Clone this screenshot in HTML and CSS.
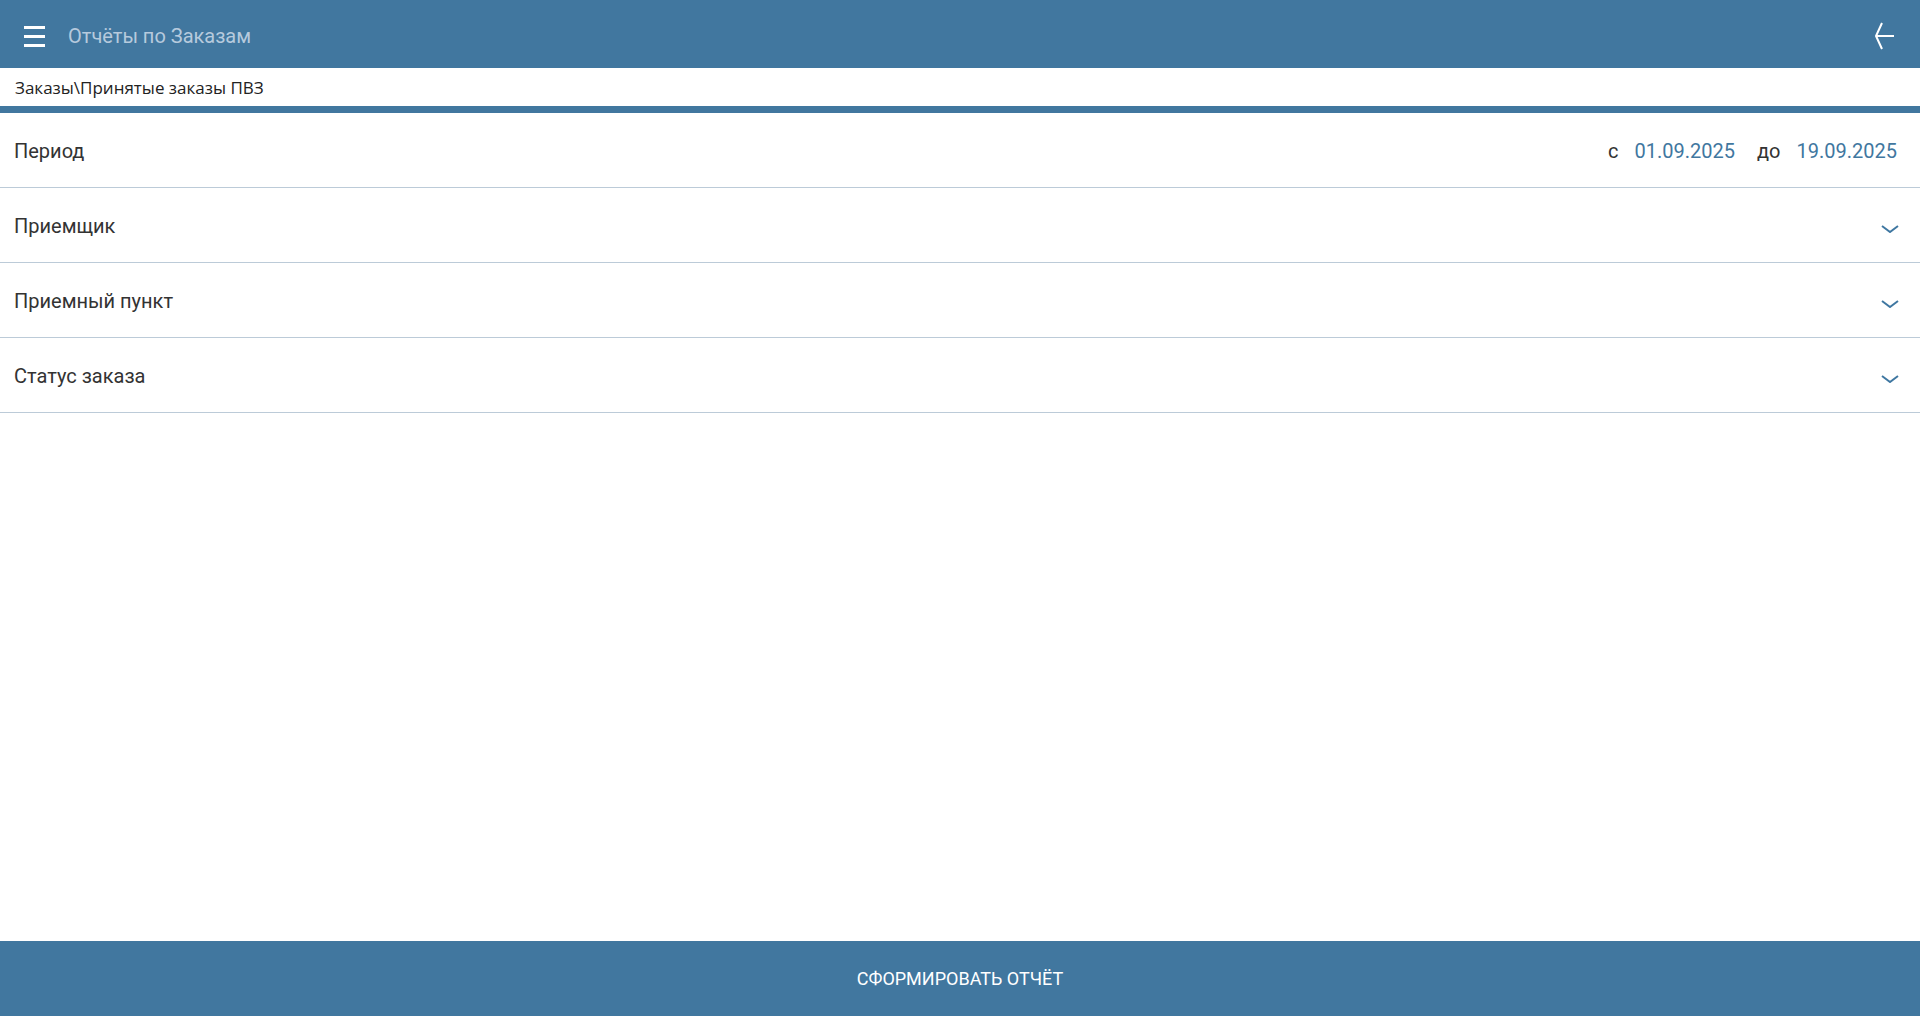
FILE: index.html
```html
<!DOCTYPE html>
<html lang="ru">
<head>
  <meta charset="UTF-8" />
  <meta name="viewport" content="width=device-width, initial-scale=1.0" />
  <title>Отчёты по Заказам</title>
  <link rel="stylesheet" href="styles.css">
</head>
<body>
  <header class="topbar">
    <button class="menu-btn" aria-label="Меню">
      <span></span><span></span><span></span>
    </button>
    <div class="title">Отчёты по Заказам</div>
    <button class="back-btn" aria-label="Назад">
      <svg width="20" height="28" viewBox="0 0 20 28">
        <path d="M7 1 L1 14 L7 27 M1.5 14 H19" fill="none" stroke="#fff" stroke-width="2" />
      </svg>
    </button>
  </header>

  <div class="breadcrumb">Заказы\Принятые заказы ПВЗ</div>

  <div class="filters">
    <div class="row">
      <span class="label">Период</span>
      <div class="period">
        <span>с</span>
        <span class="date">01.09.2025</span>
        <span class="to">до</span>
        <span class="date">19.09.2025</span>
      </div>
    </div>
    <div class="row">
      <span class="label">Приемщик</span>
      <svg class="chevron" width="18" height="8" viewBox="0 0 18 8"><path d="M1 1 L9 7 L17 1" fill="none" stroke="#3f77a1" stroke-width="2" /></svg>
    </div>
    <div class="row">
      <span class="label">Приемный пункт</span>
      <svg class="chevron" width="18" height="8" viewBox="0 0 18 8"><path d="M1 1 L9 7 L17 1" fill="none" stroke="#3f77a1" stroke-width="2" /></svg>
    </div>
    <div class="row">
      <span class="label">Статус заказа</span>
      <svg class="chevron" width="18" height="8" viewBox="0 0 18 8"><path d="M1 1 L9 7 L17 1" fill="none" stroke="#3f77a1" stroke-width="2" /></svg>
    </div>
  </div>

  <div class="spacer"></div>

  <button class="submit">СФОРМИРОВАТЬ ОТЧЁТ</button>
</body>
</html>
```

FILE: styles.css
```css
:root {
  --blue: #41779f;
  --line: #bccbd8;
  --text: #333;
  --title: #b6cadd;
}

* {
  margin: 0;
  padding: 0;
  box-sizing: border-box;
}

body {
  height: 100vh;
  display: flex;
  flex-direction: column;
  background: #fff;
  font-family: Roboto, 'Liberation Sans', sans-serif;
  color: var(--text);
  overflow: hidden;
}

button {
  border: none;
  background: none;
  cursor: pointer;
  font-family: inherit;
}

.topbar {
  height: 68px;
  background: var(--blue);
  display: flex;
  align-items: center;
  padding: 0 24px;
}

.menu-btn {
  width: 21px;
  display: flex;
  flex-direction: column;
  gap: 6px;
  margin-top: 4px;
}

.menu-btn span {
  display: block;
  height: 3px;
  background: #fff;
}

.title {
  margin-left: 23px;
  margin-top: 4px;
  font-size: 20px;
  color: var(--title);
}

.back-btn {
  margin-left: auto;
  margin-right: 1px;
  display: flex;
  margin-top: 4px;
}

.breadcrumb {
  height: 45px;
  padding: 8px 15px 0;
  border-bottom: 7px solid var(--blue);
  font-family: 'Open Sans', sans-serif;
  font-size: 17px;
  color: #222;
}

.row {
  height: 75px;
  display: flex;
  align-items: center;
  justify-content: space-between;
  padding: 2px 23px 0 14px;
  border-bottom: 1px solid var(--line);
  font-size: 20px;
}

.period {
  display: flex;
  gap: 16px;
}

.period .to {
  margin-left: 6px;
}

.date {
  color: var(--blue);
}

.chevron {
  margin-right: -2px;
  margin-top: 5px;
}

.spacer {
  flex: 1;
}

.submit {
  height: 75px;
  background: var(--blue);
  color: #fff;
  font-size: 18px;
  width: 100%;
}
```
